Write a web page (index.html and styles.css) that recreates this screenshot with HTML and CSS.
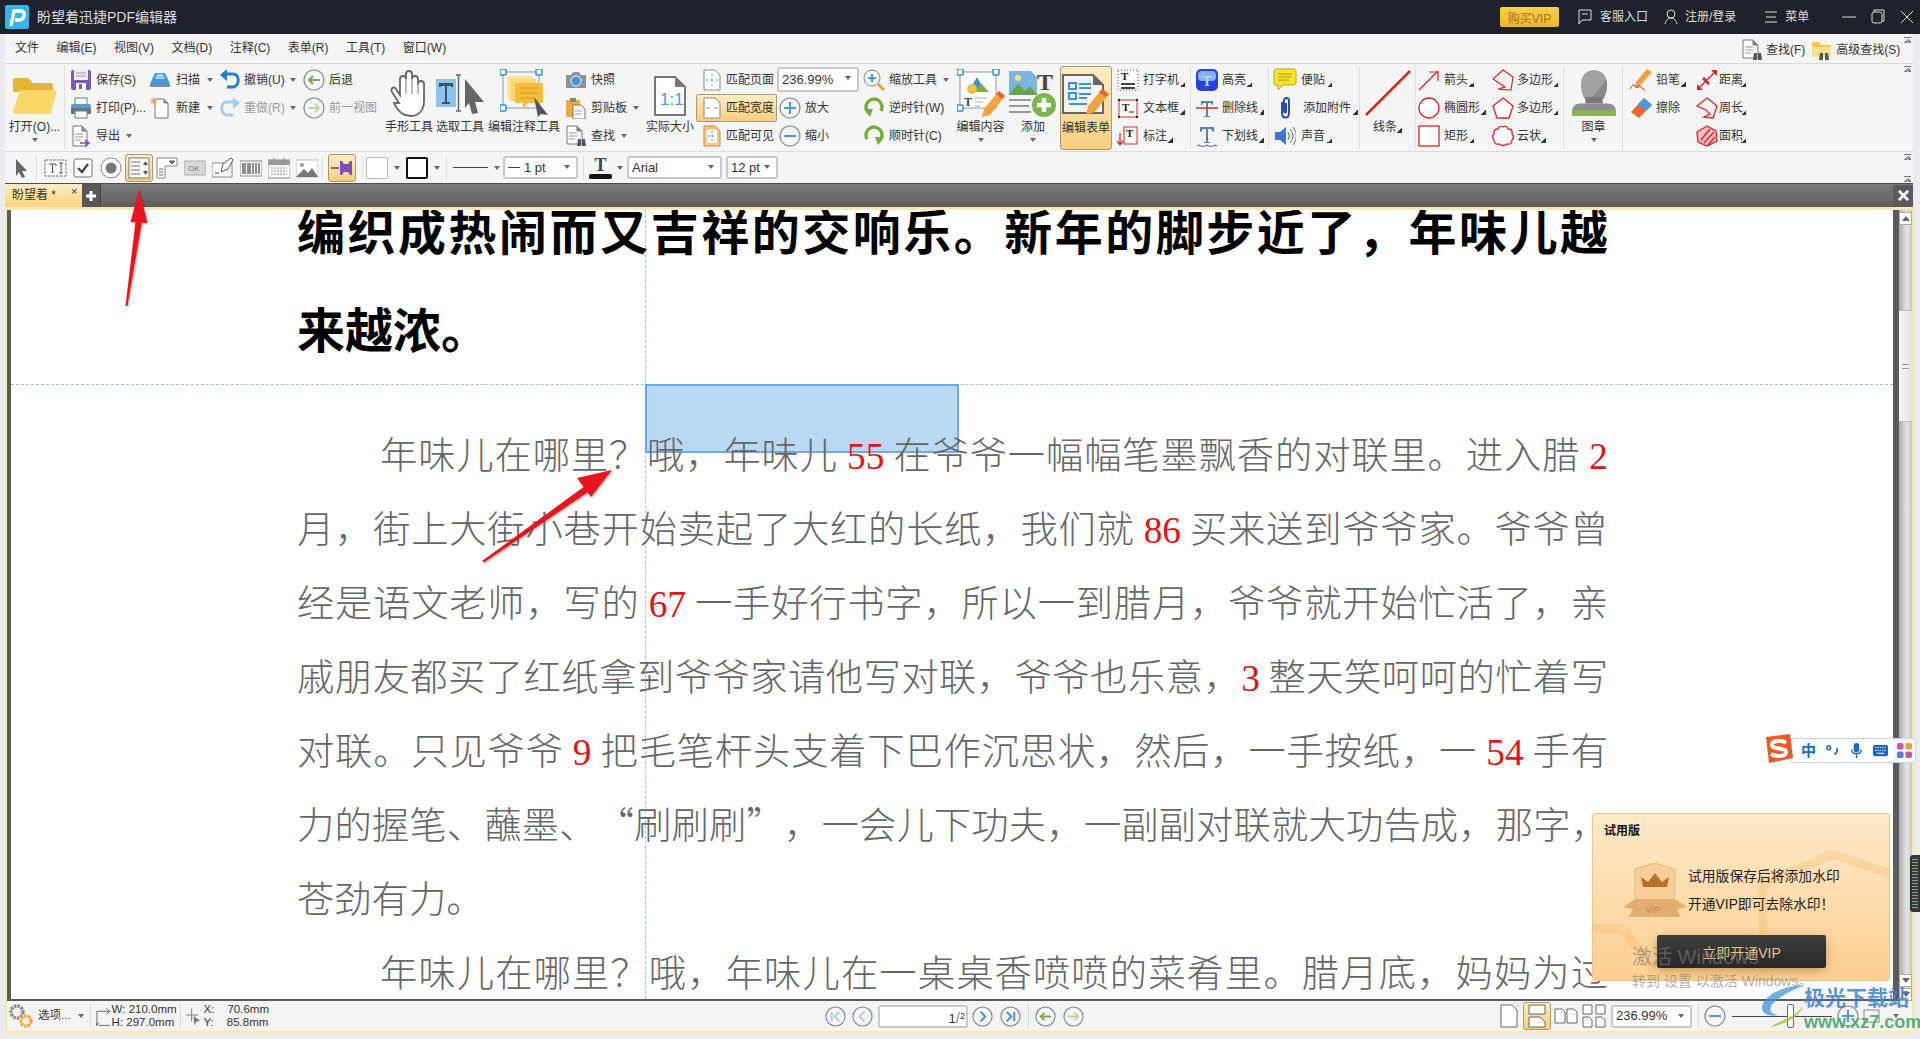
FILE: index.html
```html
<!DOCTYPE html>
<html lang="zh">
<head>
<meta charset="utf-8">
<title>盼望着迅捷PDF编辑器</title>
<link rel="stylesheet" href="styles.css">
</head>
<body>
<svg class="defs" aria-hidden="true">
  <symbol id="docbin" viewBox="0 0 22 22"><path d="M2 1h10l5 5v13H2z" fill="#fff" stroke="#777"/><path d="M12 1v5h5" fill="#888" stroke="#777"/><path d="M4 8h8M4 11h8M4 14h6" stroke="#999"/><path d="M13 14h3v7h-4zM17 14h3l1 7h-4z" fill="#4c5a66"/></symbol>
  <symbol id="circ" viewBox="0 0 22 22"><circle cx="11" cy="11" r="10" fill="#f6f6f6" stroke="#7f8a90" stroke-width="1.2"/></symbol>
</svg>
<div class="app">
  <header class="titlebar">
    <svg class="logo" viewBox="0 0 24 24"><rect width="24" height="24" rx="2" fill="#38b1ee"/><path d="M6 21L9 6h7c5 0 4 8-1 9h-5" fill="none" stroke="#fff" stroke-width="3.400"/></svg>
    <span class="apptitle">盼望着迅捷PDF编辑器</span>
    <button class="vip">购买VIP</button>
    <svg class="tico ms19" viewBox="0 0 14 16"><path d="M1 1h12v10H4l-3 4z" fill="none" stroke="#ddd"/><path d="M4 5h6" stroke="#ddd"/></svg>
    <span class="tlink ms8">客服入口</span>
    <svg class="tico ms16" viewBox="0 0 14 16"><circle cx="7" cy="5" r="4" fill="none" stroke="#ddd"/><path d="M1 15c1-4 3-6 6-6s5 2 6 6" fill="none" stroke="#ddd"/></svg>
    <span class="tlink ms7">注册/登录</span>
    <svg class="tico ms28" viewBox="0 0 14 16"><path d="M1 3h12M2 8h10M1 13h12" stroke="#ddd"/></svg>
    <span class="tlink ms7">菜单</span>
    <svg class="tico ms33" viewBox="0 0 14 16"><path d="M0 8h14" stroke="#ddd"/></svg>
    <svg class="tico ms15" viewBox="0 0 14 16"><path d="M3 3V1h10v11h-2" fill="none" stroke="#ddd"/><rect x="1" y="3" width="10" height="11" rx="2" fill="none" stroke="#ddd"/></svg>
    <svg class="tico ms15" viewBox="0 0 14 16"><path d="M1 2l12 12M13 2L1 14" stroke="#ddd"/></svg>
  </header>

  <div class="shell">
    <nav class="menubar">
      <span>文件</span><span>编辑(E)</span><span>视图(V)</span><span>文档(D)</span><span>注释(C)</span><span>表单(R)</span><span>工具(T)</span><span>窗口(W)</span>
      <div class="search">
        <svg class="ic" viewBox="0 0 22 22"><use href="#docbin"/></svg><span class="s1">查找(F)</span>
        <svg class="ic s2i" viewBox="0 0 22 22"><path d="M1 3h7l2 3h10v12H1z" fill="#f5c84a"/><path d="M1 8h19v10H1z" fill="#fbe08a"/><path d="M9 14h3v7H8zM14 14h3l1 7h-4z" fill="#4c5a66"/></svg><span class="s3">高级查找(S)</span>
      </div>
      <i class="grip"></i>
    </nav>

    <section class="ribbon">
      <div class="big w60 sep">
        <div class="bigic"><svg class="folder" viewBox="0 0 46 38"><path d="M3 1h13l5 5h17c2 0 3 1 3 3v6H1V3c0-1 1-2 2-2z" fill="#e7b434"/><path d="M8 13h37l-6 22c-.5 2-1 2-3 2H4c-2 0-3-1-3-3z" fill="#fbd868"/></svg></div>
        <span>打开(O)...</span><i class="caret"></i>
      </div>

      <div class="col w81 pl5 g4">
        <div class="row"><svg class="ic" viewBox="0 0 22 22"><rect x="1" y="1" width="20" height="20" rx="2" fill="#7c5cb2"/><rect x="4" y="1" width="14" height="10" fill="#eee"/><path d="M6 4h10M6 7h10" stroke="#999"/><rect x="6" y="14" width="10" height="7" fill="#fff"/><rect x="9" y="15" width="3" height="5" fill="#7c5cb2"/></svg>保存(S)</div>
        <div class="row"><svg class="ic" viewBox="0 0 22 22"><rect x="5" y="1" width="12" height="7" fill="#fff" stroke="#6a7c8c"/><rect x="1" y="7" width="20" height="10" rx="2" fill="#5a9bd0"/><rect x="1" y="11" width="20" height="6" rx="1" fill="#66747f"/><rect x="5" y="14" width="12" height="7" fill="#fff" stroke="#6a7c8c"/></svg>打印(P)...</div>
        <div class="row"><svg class="ic" viewBox="0 0 22 22"><path d="M3 1h9l5 5v15H3z" fill="#fff" stroke="#777"/><path d="M12 1v5h5" fill="#999" stroke="#777"/><path d="M5 9h8M5 12h8M5 15h6" stroke="#999"/><path d="M10 18h8M15 15l4 3-4 3" fill="none" stroke="#7a4fb8" stroke-width="1.6"/></svg>导出<i class="caret m8"></i></div>
      </div>
      <div class="col w70 pl3 g5">
        <div class="row"><svg class="ic" viewBox="0 0 22 22"><path d="M6 4h10l5 11H1z" fill="#3c98e0"/><path d="M8 5h6l2 5H6z" fill="#9fd3f6"/><rect x="1" y="15" width="20" height="3" rx="1" fill="#7c8c98"/></svg>扫描<i class="caret m7"></i></div>
        <div class="row"><svg class="ic" viewBox="0 0 22 22"><path d="M6 2h9l4 4v15H6z" fill="#fff" stroke="#777"/><path d="M15 2v4h4" fill="#999" stroke="#777"/><path d="M1 4h7M4.500 .5v7M2 1.500l5 5M7 1.500l-5 5" stroke="#f0a32c"/></svg>新建<i class="caret m7"></i></div>
      </div>
      <div class="col w84 pl3 g3">
        <div class="row"><svg class="ic" viewBox="0 0 22 22"><path d="M6 5h8c7 0 7 12 0 13H8" fill="none" stroke="#1f7fd0" stroke-width="3"/><path d="M8 0L1 6l7 6z" fill="#1f7fd0"/></svg>撤销(U)<i class="caret m6"></i></div>
        <div class="row off"><svg class="ic" viewBox="0 0 22 22"><path d="M16 5H8C1 5 1 17 8 18h6" fill="none" stroke="#a5cdea" stroke-width="3"/><path d="M14 0l7 6-7 6z" fill="#a5cdea"/></svg>重做(R)<i class="caret m6"></i></div>
      </div>
      <div class="col w84 pl3 g4">
        <div class="row"><svg class="ic" viewBox="0 0 22 22"><use href="#circ"/><path d="M17 11H6M10 7l-4 4 4 4" fill="none" stroke="#79ab4c" stroke-width="2"/></svg>后退</div>
        <div class="row off"><svg class="ic" viewBox="0 0 22 22"><use href="#circ"/><path d="M5 11h11M12 7l4 4-4 4" fill="none" stroke="#bcd6a6" stroke-width="2"/></svg>前一视图</div>
      </div>

      <div class="big w50">
        <div class="bigic"><svg class="bi38" viewBox="0 0 38 50"><path d="M9 35L2 24c-2-4 2-6 4-3l4 6V11c0-4 6-4 6 0V6c0-4 6-4 6 0v5c0-4 6-4 6 0v5c0-4 6-4 6 0v17c0 10-6 15-13 15-8 0-13-4-17-13z" fill="#fff" stroke="#666" stroke-width="1.800"/><path d="M16 10v16M22 10v16M28 15v11" stroke="#777"/></svg></div>
        <span>手形工具</span>
      </div>
      <div class="big w52">
        <div class="bigic"><svg class="bi48" viewBox="0 0 48 48"><rect x="0" y="10" width="20" height="28" fill="#8cc4ef"/><path d="M3 14h14v4h-2v-1h-4v16h3v2H6v-2h3V17H5v1H3z" fill="#3d5260"/><path d="M20 6h5M20 42h5M22.500 6v36" stroke="#666" stroke-width="1.500"/><path d="M29 10l19 23-9 0 3 11-6 1-3-11-4 5z" fill="#666"/></svg></div>
        <span>选取工具</span>
      </div>
      <div class="big w76">
        <div class="bigic"><svg class="bi48" viewBox="0 0 48 48"><rect x="3" y="3" width="36" height="36" fill="none" stroke="#8a9aa8"/><rect x="0" y="0" width="6" height="6" rx="1" fill="#fff" stroke="#2d8fe0" stroke-width="1.500"/><rect x="36" y="0" width="6" height="6" rx="1" fill="#fff" stroke="#2d8fe0" stroke-width="1.500"/><rect x="0" y="36" width="6" height="6" rx="1" fill="#fff" stroke="#2d8fe0" stroke-width="1.500"/><rect x="7" y="7" width="26" height="22" fill="#fbe79a"/><rect x="10" y="10" width="26" height="22" fill="#fad777"/><path d="M15 14h28v20H28l-5 6v-6h-8z" fill="#f6bd3b"/><path d="M20 19h18M20 24h18M20 29h14" stroke="#d49a20"/><path d="M34 28l14 18-7-1-3 3z" fill="#555"/></svg></div>
        <span>编辑注释工具</span>
      </div>

      <div class="col w82 pl3 g4">
        <div class="row"><svg class="ic" viewBox="0 0 22 22"><path d="M1 6h5l2-3h6l2 3h5v13H1z" fill="#8d9499"/><circle cx="11" cy="12" r="5" fill="#3f94da" stroke="#fff"/></svg>快照</div>
        <div class="row"><svg class="ic" viewBox="0 0 22 22"><rect x="1" y="3" width="14" height="17" rx="1" fill="#f4a636"/><rect x="5" y="1" width="6" height="4" fill="#887"/><path d="M8 8h8l4 4v10H8z" fill="#fff" stroke="#777"/><path d="M10 14h7M10 17h7" stroke="#999"/></svg>剪贴板<i class="caret m8"></i></div>
        <div class="row"><svg class="ic" viewBox="0 0 22 22"><use href="#docbin"/></svg>查找<i class="caret m8"></i></div>
      </div>
      <div class="big w52">
        <div class="bigic"><svg class="bi3442" viewBox="0 0 34 42"><path d="M2 2h20l10 10v28H2z" fill="#fff" stroke="#777" stroke-width="2"/><path d="M22 2l10 10H22z" fill="#777"/><text x="7" y="30" class="svt">1:1</text></svg></div>
        <span>实际大小</span>
      </div>
      <div class="col w81 fit">
        <div class="row"><svg class="ic" viewBox="0 0 22 22"><path d="M3 1h11l5 5v15H3z" fill="#fff" stroke="#888"/><path d="M11 5v12M5 11h12" stroke="#4a9ad8" stroke-dasharray="2 3"/></svg>匹配页面</div>
        <div class="row on"><svg class="ic" viewBox="0 0 22 22"><path d="M3 1h11l5 5v15H3z" fill="#fff" stroke="#888"/><path d="M5 11h4M13 11h4" stroke="#4a9ad8"/></svg>匹配宽度</div>
        <div class="row"><svg class="ic" viewBox="0 0 22 22"><path d="M3 1h11l5 5v15H3z" fill="#f7c98b" stroke="#c98a3a"/><rect x="6" y="5" width="10" height="13" fill="#fff"/><path d="M11 6v11M7 11h8" stroke="#4a9ad8" stroke-dasharray="2 2"/></svg>匹配可见</div>
      </div>
      <div class="col w84 pl2 g4 zm">
        <div class="combo z">236.99%<i class="caret"></i></div>
        <div class="row"><svg class="ic" viewBox="0 0 22 22"><use href="#circ"/><path d="M11 5v12M5 11h12" stroke="#4a9ad8" stroke-width="2"/></svg>放大</div>
        <div class="row"><svg class="ic" viewBox="0 0 22 22"><use href="#circ"/><path d="M5 11h12" stroke="#4a9ad8" stroke-width="2"/></svg>缩小</div>
      </div>
      <div class="col w93 pl2 g4">
        <div class="row"><svg class="ic" viewBox="0 0 22 22"><circle cx="9" cy="9" r="8" fill="#f6f6f6" stroke="#7f8a90"/><path d="M9 5v8M5 9h8" stroke="#4a9ad8" stroke-width="2"/><path d="M15 15l6 6" stroke="#e8a02c" stroke-width="3"/></svg>缩放工具<i class="caret m6"></i></div>
        <div class="row"><svg class="ic" viewBox="0 0 22 22"><path d="M7 17a8 8 0 1 1 11-3" fill="none" stroke="#79ab3c" stroke-width="3.400"/><path d="M1 12l9 0-3 8z" fill="#79ab3c"/></svg>逆时针(W)</div>
        <div class="row"><svg class="ic" viewBox="0 0 22 22"><path d="M15 17a8 8 0 1 0-11-3" fill="none" stroke="#79ab3c" stroke-width="3.400"/><path d="M21 12l-9 0 3 8z" fill="#79ab3c"/></svg>顺时针(C)</div>
      </div>
      <div class="big w53">
        <div class="bigic"><svg class="bi48" viewBox="0 0 48 48"><rect x="3" y="3" width="36" height="36" fill="#fff" stroke="#8a9aa8"/><rect x="0" y="0" width="6" height="6" rx="1" fill="#fff" stroke="#2d8fe0" stroke-width="1.500"/><rect x="36" y="0" width="6" height="6" rx="1" fill="#fff" stroke="#2d8fe0" stroke-width="1.500"/><rect x="0" y="36" width="6" height="6" rx="1" fill="#fff" stroke="#2d8fe0" stroke-width="1.500"/><path d="M20 8l8 14H12z" fill="#3d93c9"/><path d="M24 14l8 9H18z" fill="#7fae4a"/><circle cx="15" cy="20" r="5" fill="#f0c040"/><text x="7" y="37" class="svb">T</text><path d="M18 29h12M18 33h8M18 37h5" stroke="#aaa"/><path d="M42 22l6 5-15 19-8 2 2-8z" fill="#f2a23a"/><path d="M42 22l6 5-3 3-6-5z" fill="#e8622a"/></svg></div>
        <span>编辑内容</span><i class="caret"></i>
      </div>
      <div class="big w52">
        <div class="bigic"><svg class="bi48" viewBox="0 0 48 48"><path d="M0 2h22l6 6v18H0z" fill="#7cb6e0"/><path d="M0 26l9-11 7 7 5-5 7 9z" fill="#6aa24a"/><circle cx="9" cy="9" r="3" fill="#f6e37c"/><text x="28" y="21" class="svbig">T</text><path d="M0 31h22M0 37h20M0 43h22" stroke="#999" stroke-width="2"/><circle cx="35" cy="36" r="12" fill="#7ab648"/><path d="M35 29v14M28 36h14" stroke="#fff" stroke-width="4.500"/></svg></div>
        <span>添加</span><i class="caret"></i>
      </div>
      <div class="big w52 on ml1">
        <div class="bigic"><svg class="bi48" viewBox="0 0 48 44"><path d="M1 3h30l10 10v28H1z" fill="#f5f5f5" stroke="#666" stroke-width="2"/><path d="M31 3l10 10H31z" fill="#666"/><path d="M7 11h7v6H7zM7 21h7v6H7z" fill="none" stroke="#3a94dc" stroke-width="2"/><path d="M17 12h12M17 16h12M17 22h12M17 26h8M7 32h18" stroke="#3a94dc" stroke-width="2"/><path d="M40 17l7 5-14 18-9 3 2-9z" fill="#f2a23a"/><path d="M40 17l7 5-3 3-7-5z" fill="#e8622a"/></svg></div>
        <span>编辑表单</span>
      </div>
      <div class="col w78 pl4 g4 ml1 sep">
        <div class="row"><svg class="ic" viewBox="0 0 22 22"><rect x="1" y="1" width="20" height="20" fill="#fff" stroke="#444" stroke-dasharray="1 2"/><text x="4" y="11" class="svs">T</text><path d="M4 14h14v2H4zM4 18h14v2H4z" fill="#444"/></svg>打字机<i class="tick"></i></div>
        <div class="row"><svg class="ic" viewBox="0 0 22 22"><rect x="2" y="3" width="18" height="17" fill="#fff" stroke="#d42a2a"/><text x="5" y="14" class="svs">T</text><path d="M12 15h5" stroke="#222"/><path d="M1 2h2v2H1zM19 2h2v2h-2zM1 19h2v2H1zM19 19h2v2h-2z" fill="#222"/></svg>文本框<i class="tick"></i></div>
        <div class="row"><svg class="ic" viewBox="0 0 22 22"><rect x="7" y="2" width="13" height="17" fill="#fff" stroke="#d42a2a"/><text x="9" y="12" class="svs">T</text><path d="M3 8v11M0 16l3 4 3-4" fill="none" stroke="#d42a2a" stroke-width="1.300"/></svg>标注<i class="tick"></i></div>
      </div>
      <div class="col w78 pl5 g4 sep">
        <div class="row"><svg class="ic" viewBox="0 0 22 22"><rect width="22" height="22" rx="5" fill="#2c3fe0"/><rect x="2" y="2" width="18" height="10" rx="4" fill="#7fb4ef"/><text x="6" y="17" class="svw">T</text></svg>高亮<i class="tick"></i></div>
        <div class="row"><svg class="ic" viewBox="0 0 22 22"><path d="M5 4h12v4h-1l-1-2h-3v13h2v1H8v-1h2V6H7L6 8H5z" fill="#5584b8"/><path d="M0 11h22" stroke="#d42a2a" stroke-width="1.500"/></svg>删除线<i class="tick"></i></div>
        <div class="row"><svg class="ic" viewBox="0 0 22 22"><path d="M4 2h14v5h-1l-2-3h-3v13h2v1H8v-1h2V4H7L5 7H4z" fill="#5584b8"/><path d="M1 21q2-2 4 0t4 0 4 0 4 0 4 0" fill="none" stroke="#4b4bcf"/></svg>下划线<i class="tick"></i></div>
      </div>
      <div class="col w91 pl5 g5 sep">
        <div class="row"><svg class="ic i24" viewBox="0 0 24 24"><path d="M3 1h18c1 0 2 1 2 2v12c0 1-1 2-2 2H10l-5 5v-5H3c-1 0-2-1-2-2V3c0-1 1-2 2-2z" fill="#f6e52c" stroke="#b8a820"/><path d="M5 6h14M5 9h14M5 12h11" stroke="#a89a1c"/></svg>便贴<i class="tick"></i></div>
        <div class="row"><svg class="ic" viewBox="0 0 22 22"><path d="M8 5v11c0 6 7 6 7 0V4c0-4-5-4-5 0v10c0 2 2 2 2 0V6" fill="none" stroke="#2c4fa8" stroke-width="2"/></svg><span class="ms2">添加附件</span><i class="tick"></i></div>
        <div class="row"><svg class="ic" viewBox="0 0 22 22"><path d="M1 7h5l6-5v18l-6-5H1z" fill="#4076d0"/><path d="M14 7q3 4 0 8M16 4q6 7 0 14M19 2q7 9 0 18" fill="none" stroke="#667"/></svg>声音<i class="tick"></i></div>
      </div>
      <div class="big w56 sepb">
        <div class="bigic"><svg class="bi46" viewBox="0 0 46 46"><path d="M1 45L45 1" stroke="#d92525" stroke-width="2.500"/></svg></div>
        <span class="lab">线条<i class="tick"></i></span>
      </div>
      <div class="col w73 pl2 g4">
        <div class="row"><svg class="ic" viewBox="0 0 22 22"><path d="M1 21L20 2M11 3h9v9" fill="none" stroke="#d92525" stroke-width="1.200"/></svg>箭头<i class="tick"></i></div>
        <div class="row"><svg class="ic" viewBox="0 0 22 22"><circle cx="11" cy="11" r="10" fill="#fff" stroke="#d92525" stroke-width="1.300"/></svg>椭圆形<i class="tick"></i></div>
        <div class="row"><svg class="ic" viewBox="0 0 22 22"><rect x="1" y="1" width="20" height="20" fill="#fff" stroke="#d92525" stroke-width="1.300"/></svg>矩形<i class="tick"></i></div>
      </div>
      <div class="col w75 pl3 g3 sep">
        <div class="row"><svg class="ic" viewBox="0 0 22 22"><path d="M11 1l10 7-2 13-13-1 7-2L1 10z" fill="none" stroke="#d92525" stroke-width="1.200"/></svg>多边形<i class="tick"></i></div>
        <div class="row"><svg class="ic" viewBox="0 0 22 22"><path d="M11 1l10 8-4 12H5L1 9z" fill="#fff" stroke="#d92525" stroke-width="1.300"/></svg>多边形<i class="tick"></i></div>
        <div class="row"><svg class="ic" viewBox="0 0 22 22"><path d="M11 2q4-2 5 2 5 0 4 5 3 3 0 6 0 5-5 4-4 3-8 0-5 1-5-4-3-3 0-6-1-5 4-5 1-4 5-2z" fill="#fff" stroke="#d92525" stroke-width="1.300"/></svg>云状<i class="tick"></i></div>
      </div>
      <div class="big w58 sepb ml1">
        <div class="bigic"><svg class="bi46" viewBox="0 0 46 48"><path d="M13 30C9 22 9 16 10 10 12 3 18 0 23 0s11 3 13 10c1 6 1 12-3 20z" fill="#a2a2a2"/><path d="M36 10c1 6 1 12-3 20H20z" fill="#8a8a8a"/><path d="M14 28h18v7H14z" fill="#777"/><path d="M0 45c0-7 3-10 9-10h28c6 0 9 3 9 10z" fill="#8f8f8f"/><rect y="42" width="46" height="6" fill="#8cb44e"/></svg></div>
        <span>图章</span><i class="caret"></i>
      </div>
      <div class="col w67 pl6 g4 ml1">
        <div class="row"><svg class="ic" viewBox="0 0 22 22"><path d="M17 0l5 3-12 14-5 2 1-6z" fill="#f2a23a"/><path d="M0 20q3-6 5-3t3 1 3 0 4 3" fill="none" stroke="#d92525"/></svg>铅笔<i class="tick"></i></div>
        <div class="row"><svg class="ic" viewBox="0 0 22 22"><path d="M14 1l8 7-13 13-8-6z" fill="#ee6a2c"/><path d="M14 1l8 7-6 6-8-7z" fill="#4a9ae4"/></svg>擦除</div>
      </div>
      <div class="col pl5 g1">
        <div class="row"><svg class="ic" viewBox="0 0 22 22"><path d="M3 19L19 3" stroke="#d92525" stroke-width="1.500"/><path d="M15 1l6 0 0 6zM1 15l6 6-6 0zM8 8l6 6-2 2-6-6z" fill="#d92525"/></svg>距离<i class="tick"></i></div>
        <div class="row"><svg class="ic" viewBox="0 0 22 22"><path d="M11 1l10 8-4 12-9-1 6-3-4-4-9-4z" fill="none" stroke="#d92525" stroke-width="1.300"/></svg>周长<i class="tick"></i></div>
        <div class="row"><svg class="ic" viewBox="0 0 22 22"><path d="M11 1l9 5 1 10-10 5-9-4-1-10z" fill="#f7c0c0" stroke="#d92525" stroke-width="1.300"/><path d="M5 15L14 4M8 18L18 7M12 20l7-8" stroke="#d92525" stroke-width="1.500"/></svg>面积<i class="tick"></i></div>
      </div>
      <i class="grip gr2"></i>
    </section>

    <section class="toolbar">
      <svg class="t12" viewBox="0 0 12 20"><path d="M1 1l11 12-5 0 3 6-3 1-3-6-3 4z" fill="#666"/></svg>
      <i class="vs ml9"></i>
      <svg class="t23 ml7" viewBox="0 0 23 22"><rect x="1" y="3" width="21" height="16" fill="#fff" stroke="#777" stroke-dasharray="3 1"/><path d="M5 7h7v2M8.500 7v8M7 15h3M15 6h4M15 16h4M17 6v10" fill="none" stroke="#555"/></svg>
      <svg class="t20 ml6" viewBox="0 0 20 22"><rect x="1" y="2" width="18" height="18" rx="2" fill="#fff" stroke="#777"/><path d="M5 11l4 4 6-8" fill="none" stroke="#444" stroke-width="2.200"/></svg>
      <svg class="t22 ml7" viewBox="0 0 22 22"><circle cx="11" cy="11" r="10" fill="#fff" stroke="#888"/><circle cx="11" cy="11" r="5.500" fill="#777"/></svg>
      <div class="tact ml3"><svg class="t22" viewBox="0 0 22 22"><rect x="1" y="1" width="20" height="20" fill="#fff" stroke="#777"/><path d="M3 5h9M3 9h9M3 13h9M3 17h9" stroke="#666"/><path d="M15 8l2.500-4 2.500 4zM15 14l2.500 4 2.500-4z" fill="#555"/></svg></div>
      <svg class="t22 ml3" viewBox="0 0 22 22"><path d="M1 1h20v8H9v12H1z" fill="#fff" stroke="#888"/><path d="M13 4h6l-3 3zM3 12h4M3 15h4M3 18h4" fill="#666" stroke="#666"/></svg>
      <svg class="t22 ml6" viewBox="0 0 22 22"><rect y="4" width="22" height="14" rx="1" fill="#d8d8d8" stroke="#aaa"/><text x="4" y="14" class="svok">OK</text></svg>
      <svg class="t22 ml6" viewBox="0 0 22 22"><rect y="6" width="20" height="14" fill="#fff" stroke="#888"/><path d="M3 16h4" stroke="#444"/><path d="M9 15l2-8 8-6 2 2-5 9z" fill="#fff" stroke="#555"/></svg>
      <svg class="t22 ml6" viewBox="0 0 22 22"><rect y="4" width="22" height="15" fill="#fff" stroke="#888"/><path d="M3 6v11M5 6v11M8 6v11M10 6v11M13 6v11M16 6v11M19 6v11" stroke="#555" stroke-width="1.300"/></svg>
      <svg class="t22 ml6" viewBox="0 0 22 22"><rect y="3" width="22" height="18" fill="#fff" stroke="#888"/><rect y="3" width="22" height="5" fill="#999"/><path d="M6 1v4M16 1v4M3 11h16M3 14h16M3 17h16" stroke="#888" stroke-dasharray="2 1"/></svg>
      <svg class="t22 ml6" viewBox="0 0 22 22"><rect y="3" width="22" height="17" fill="#fff" stroke="#bbb"/><path d="M0 20l8-8 4 4 4-5 6 9z" fill="#777"/><circle cx="6" cy="8" r="2" fill="#999"/></svg>
      <i class="vs ml4"></i>
      <div class="tact ml5"><svg class="t22" viewBox="0 0 22 22"><path d="M0 11h8" stroke="#4b4b4b" stroke-width="1.500"/><path d="M9 4h2l2 3h4l2-3h2v14h-2l-2-3h-4l-2 3H9z" fill="#7a4fb8"/></svg></div>
      <i class="vs ml6"></i>
      <div class="swatch ml3"></div><i class="caret ml6"></i>
      <div class="swatch dark ml6"></div><i class="caret ml6"></i>
      <i class="vs ml6"></i>
      <div class="lineprev ml6"></div><i class="caret ml6"></i>
      <div class="combo w75 ml3"><span class="dash"></span>1 pt<i class="caret"></i></div>
      <i class="vs ml5"></i>
      <div class="tcolor ml5"><span>T</span><b></b></div><i class="caret ml5"></i>
      <div class="combo w95 ml4">Arial<i class="caret"></i></div>
      <div class="combo w52 ml4">12 pt<i class="caret"></i></div>
      <i class="grip gr3"></i><i class="grip gr4"></i>
    </section>

    <div class="tabbar">
      <div class="tab">盼望着 *<small>×</small></div>
      <div class="plus"><svg viewBox="0 0 10 10"><path d="M5 0v10M0 5h10" stroke="#fff" stroke-width="3"/></svg></div>
      <div class="tabclose"><svg viewBox="0 0 12 12"><path d="M1 1l10 10M11 1L1 11" stroke="#fff" stroke-width="3"/></svg></div>
    </div>
  </div>

  <div class="frame">
    <div class="work">
      <main class="doc">
        <i class="guide-v"></i><i class="guide-h"></i>
        <div class="selbox"></div>
        <div class="page">
          <h1>编织成热闹而又吉祥的交响乐。新年的脚步近了，年味儿越</h1>
          <h1 class="last">来越浓。</h1>
          <p class="ind">年味儿在哪里？哦，年味儿 <b>55</b> 在爷爷一幅幅笔墨飘香的对联里。进入腊 <b>2</b></p>
          <p>月，街上大街小巷开始卖起了大红的长纸，我们就 <b>86</b> 买来送到爷爷家。爷爷曾</p>
          <p>经是语文老师，写的 <b>67</b> 一手好行书字，所以一到腊月，爷爷就开始忙活了，亲</p>
          <p>戚朋友都买了红纸拿到爷爷家请他写对联，爷爷也乐意，<b>3</b> 整天笑呵呵的忙着写</p>
          <p>对联。只见爷爷 <b>9</b> 把毛笔杆头支着下巴作沉思状，然后，一手按纸，一 <b>54</b> 手有</p>
          <p>力的握笔、蘸墨、“刷刷刷”，一会儿下功夫，一副副对联就大功告成，那字，</p>
          <p class="last">苍劲有力。</p>
          <p class="ind">年味儿在哪里？哦，年味儿在一桌桌香喷喷的菜肴里。腊月底，妈妈为过</p>
        </div>
      </main>
      <aside class="vscroll">
        <div class="sbtn up"></div>
        <div class="thumb"><i></i></div>
        <div class="sbtn dn dn1"></div>
        <div class="sbtn dn"></div>
      </aside>
    </div>
    <footer class="status">
      <svg class="st24" viewBox="0 0 24 24"><circle cx="8" cy="8" r="6" fill="none" stroke="#8a8a8a" stroke-width="3.500" stroke-dasharray="2.500 1"/><circle cx="17" cy="17" r="5" fill="none" stroke="#f2a53a" stroke-width="3.500" stroke-dasharray="2.500 1"/></svg>
      <span class="ml5">选项...</span><i class="caret ml7"></i>
      <i class="vs ml6"></i>
      <svg class="st16 ml5" viewBox="0 0 16 24"><path d="M1 22V7h13M11 4l4 3-4 3M1 22l-1-3M1 22l2-3M3 22h12" fill="none" stroke="#666"/></svg>
      <div class="coords"><span>W: 210.0mm</span><span>H: 297.0mm</span></div>
      <i class="vs ml3"></i>
      <svg class="st16 ml5" viewBox="0 0 16 24"><path d="M6 4v14M0 11h13" stroke="#777"/><path d="M8 12l7 5-4 1-2 4z" fill="#777"/></svg>
      <div class="coords xy"><span>X:<em>70.6mm</em></span><span>Y:<em>85.8mm</em></span></div>

      <div class="nav">
        <svg class="rb" viewBox="0 0 22 22"><use href="#circ"/><path d="M7 6v10M15 6l-5 5 5 5" fill="none" stroke="#a9cfee" stroke-width="2"/></svg>
        <svg class="rb ml6" viewBox="0 0 22 22"><use href="#circ"/><path d="M13 6l-5 5 5 5" fill="none" stroke="#a9cfee" stroke-width="2"/></svg>
        <div class="pageno ml5">1<span>/</span><small>2</small></div>
        <svg class="rb ml4" viewBox="0 0 22 22"><use href="#circ"/><path d="M9 6l5 5-5 5" fill="none" stroke="#3f94da" stroke-width="2"/></svg>
        <svg class="rb ml7" viewBox="0 0 22 22"><use href="#circ"/><path d="M15 6v10M7 6l5 5-5 5" fill="none" stroke="#3f94da" stroke-width="2"/></svg>
        <i class="vs ml7"></i>
        <svg class="rb ml6" viewBox="0 0 22 22"><use href="#circ"/><path d="M17 11H6M10 7l-4 4 4 4" fill="none" stroke="#79ab4c" stroke-width="2"/></svg>
        <svg class="rb ml7" viewBox="0 0 22 22"><use href="#circ"/><path d="M5 11h11M12 7l4 4-4 4" fill="none" stroke="#bcd6a6" stroke-width="2"/></svg>
      </div>

      <div class="views">
        <svg class="v18" viewBox="0 0 18 24"><path d="M1 1h11l5 5v17H1z" fill="#fff" stroke="#666"/></svg>
        <div class="vact ml5"><svg class="v18" viewBox="0 0 18 24"><path d="M1 1h16v9H1zM1 13h11l5 5v5H1z" fill="#fff" stroke="#666"/></svg></div>
        <svg class="v24 ml3" viewBox="0 0 24 24"><path d="M1 5h7l3 3v11H1zM13 5h7l3 3v11H13z" fill="#fff" stroke="#666"/></svg>
        <svg class="v24 ml4" viewBox="0 0 24 24"><path d="M1 1h9v9H1zM14 1h9v9h-9zM1 13h6l3 3v7H1zM14 13h6l3 3v7h-9z" fill="#fff" stroke="#666"/></svg>
        <div class="combo w81 ml5">236.99%<i class="caret"></i></div>
        <i class="vs ml6"></i>
        <svg class="zb ml5" viewBox="0 0 22 22"><use href="#circ"/><path d="M5 11h12" stroke="#4a9ad8" stroke-width="2"/></svg>
        <div class="slider ml6"><i></i></div>
        <svg class="zb ml5" viewBox="0 0 22 22"><use href="#circ"/><path d="M11 5v12M5 11h12" stroke="#4a9ad8" stroke-width="2"/></svg>
        <svg class="v18 ml4" viewBox="0 0 18 24"><rect x="1" y="6" width="15" height="12" fill="none" stroke="#888"/></svg>
        <i class="caret ml12"></i>
      </div>
    </footer>
  </div>

  <svg class="redarrows" viewBox="0 0 700 600">
    <defs><filter id="sh"><feDropShadow dx="1" dy="1" stdDeviation="1" flood-opacity=".3"/></filter></defs>
    <g filter="url(#sh)">
      <path d="M125.500 306L136 218 142.500 218.500 127.500 306z" fill="#e8141c"/>
      <path d="M139 190l-8.500 32 17 1z" fill="#e8141c"/>
      <path d="M482 561L585 486 589 491.500 484 562.500z" fill="#e8141c"/>
      <path d="M612 470l-35 8 14 19z" fill="#e8141c"/>
    </g>
  </svg>

  <div class="ime">
    <svg class="imes" viewBox="0 0 30 30"><path d="M3 3l24-3 3 24-24 5z" fill="#ee5a24"/><path d="M23 9c-3-3-14-3-14 2s14 2 14 7-10 5-15 2" fill="none" stroke="#fff" stroke-width="4"/></svg>
    <div class="imebar">
      <b>中</b>
      <svg class="imi" viewBox="0 0 16 16"><circle cx="4" cy="5" r="2" fill="none" stroke="#1669c8" stroke-width="1.500"/><path d="M12 6c2 0 1 5-2 6" fill="none" stroke="#1669c8" stroke-width="2"/></svg>
      <svg class="imi" viewBox="0 0 16 16"><rect x="5" width="6" height="10" rx="3" fill="#1669c8"/><path d="M3 7c0 6 10 6 10 0M8 12v4" fill="none" stroke="#1669c8" stroke-width="1.500"/></svg>
      <svg class="imi" viewBox="0 0 16 16"><rect y="2" width="16" height="12" rx="2" fill="#1669c8"/><path d="M2 5h12M2 8h12" stroke="#fff" stroke-dasharray="1.500 1"/><path d="M4 11h8" stroke="#fff"/></svg>
      <svg class="imi" viewBox="0 0 16 16"><rect width="7" height="7" rx="2" fill="#c45ab0"/><rect x="9" width="7" height="7" rx="2" fill="#e8a030"/><rect y="9" width="7" height="7" rx="2" fill="#5a7fd8"/><rect x="9" y="9" width="7" height="7" rx="2" fill="#c45ab0"/></svg>
    </div>
  </div>

  <aside class="promo">
    <svg class="promobg" viewBox="0 0 298 168"><path d="M170 168V70L240 40 298 60M0 115h30l30 40" fill="none" stroke="#f4bd73" stroke-opacity=".35" stroke-width="9"/></svg>
    <h2>试用版</h2>
    <div class="promomain">
      <svg class="badge" viewBox="0 0 64 58"><path d="M12 6L32 0 52 6v24c0 10-10 18-20 22C22 48 12 40 12 30z" fill="#f6cf98" stroke="#e9b878"/><path d="M20 24l-2-10 7 5 7-9 7 9 7-5-2 10z" fill="#b8702a"/><path d="M0 44l12-8h40l12 8-10 2 4 8H6l4-8z" fill="#e3ad6e"/><text x="23" y="50" class="svvip">VIP</text></svg>
      <div class="promotxt"><p>试用版保存后将添加水印</p><p>开通VIP即可去除水印！</p></div>
    </div>
    <button class="open">立即开通VIP</button>
  </aside>

  <div class="winact"><b>激活 Windows</b><span>转到 设置 以激活 Windows。</span></div>

  <div class="mark">
    <svg class="markic" viewBox="0 0 46 44"><path d="M44 1C22 2 2 12 2 24c0 6 8 9 16 7C8 30 8 22 18 15 26 9 36 5 44 1z" fill="#3f94da" fill-opacity=".75"/><path d="M10 43c14-2 30-10 34-22-6 10-22 15-34 22z" fill="#9ac640" fill-opacity=".8"/></svg>
    <div class="marktxt"><b>极光下载站</b><span>www.xz7.com</span></div>
  </div>
  <div class="gadget"></div>
</div>
</body>
</html>
```

FILE: styles.css
```css
* { box-sizing: border-box; }
html, body { margin: 0; height: 100%; }
body { background: #ececf0; font: 12px/1.2 "Liberation Sans", "Noto Sans CJK SC", sans-serif; color: #333; overflow: hidden; }
.defs { position: absolute; width: 0; height: 0; }
i, em { font-style: normal; }
.app { position: relative; width: 1920px; height: 1039px; display: flex; flex-direction: column; overflow: hidden; }

.titlebar { height: 34px; background: #1f222a; display: flex; align-items: center; padding-left: 5px; color: #ddd; flex: none; }
.logo { width: 24px; height: 24px; }
.apptitle { margin-left: 8px; font-size: 14px; width: 1463px; color: #dcdcdc; }
.vip { width: 59px; height: 20px; padding: 0; border: 0; border-radius: 2px; background: linear-gradient(#fbd14b, #efb52f); color: #a3761c; font: 12px "Liberation Sans", "Noto Sans CJK SC", sans-serif; }
.tico { width: 14px; height: 16px; flex: none; }
.tlink { color: #ddd; font-size: 12px; white-space: nowrap; }
.ms19 { margin-left: 19px; } .ms8 { margin-left: 8px; } .ms16 { margin-left: 16px; } .ms7 { margin-left: 7px; }
.ms28 { margin-left: 28px; } .ms33 { margin-left: 33px; } .ms15 { margin-left: 15px; } .ms2 { margin-left: 2px; }

.shell { margin: 0 7px 0 5px; background: #f5f5f5; flex: none; }
.menubar { height: 30px; display: flex; align-items: center; gap: 17.500px; padding-left: 10px; position: relative; border-bottom: 1px solid #d9d9d9; }
.search { position: absolute; left: 1736px; top: 4px; height: 24px; display: flex; align-items: center; }
.search .s1 { margin-left: 3px; }
.search .s2i { margin-left: 6px; }
.search .s3 { margin-left: 3px; }
.grip { position: absolute; right: 2px; width: 7px; height: 6px; border-top: 1px solid #777; background: linear-gradient(135deg, transparent 48%, #888 50%) left/50% 100% no-repeat, linear-gradient(225deg, transparent 48%, #888 50%) right/50% 100% no-repeat; }
.menubar .grip { top: 3px; }

.ribbon { height: 88px; display: flex; padding-top: 2px; border-bottom: 1px solid #dcdcdc; position: relative; }
.ribbon .grip { top: 2px; }
.col { display: flex; flex-direction: column; flex: none; }
.row { height: 28px; display: flex; align-items: center; white-space: nowrap; flex: none; }
.ic { width: 22px; height: 22px; flex: none; }
.i24 { width: 24px; height: 24px; margin-left: -1px; margin-right: -1px; }
.off { color: #9a9a9a; }
.sep { border-right: 1px solid #e2e2e2; height: 83px; }
.sepb { border-right: 1px solid #e2e2e2; height: 83px; }
.w60 { width: 60px; } .w50 { width: 50px; } .w52 { width: 52px; } .w53 { width: 53px; } .w56 { width: 56px; } .w58 { width: 58px; }
.w67 { width: 67px; } .w70 { width: 70px; } .w73 { width: 73px; } .w75 { width: 75px; } .w76 { width: 76px; } .w78 { width: 78px; }
.w81 { width: 81px; } .w82 { width: 82px; } .w84 { width: 84px; } .w91 { width: 91px; } .w93 { width: 93px; } .w95 { width: 95px; }
.pl2 { padding-left: 2px; } .pl3 { padding-left: 3px; } .pl4 { padding-left: 4px; } .pl5 { padding-left: 5px; } .pl6 { padding-left: 6px; }
.g1 .row { gap: 1px; } .g3 .row { gap: 3px; } .g4 .row { gap: 4px; } .g5 .row { gap: 5px; }
.fit .row { padding-left: 4px; gap: 3px; border: 1px solid transparent; border-radius: 2px; }
.on { background: linear-gradient(#fcecc4, #f7cf7e); border: 1px solid #a89a70 !important; border-radius: 3px; }
.caret { display: block; flex: none; width: 0; height: 0; border-top: 4px solid #666; border-left: 3px solid transparent; border-right: 3px solid transparent; }
.row .m6 { margin-left: 2px; } .row .m7 { margin-left: 2px; } .row .m8 { margin-left: 2px; }
.tick { display: block; flex: none; width: 5px; height: 5px; margin: 8px 0 0 -3px; background: linear-gradient(135deg, transparent 50%, #333 50%); }
.big { display: flex; flex-direction: column; align-items: center; flex: none; height: 84px; white-space: nowrap; }
.big > span { line-height: 15px; }
.big .caret { margin-top: 3px; }
.big.w60 { border-right: 1px solid #e2e2e2; height: 83px; }
.bigic { height: 54px; display: flex; align-items: center; justify-content: center; flex: none; width: 100%; }
.lab { display: flex; }
.lab .tick { margin-left: 0; }
.folder { width: 46px; height: 38px; margin-top: 6px; }
.bi38 { width: 38px; height: 50px; }
.bi48 { width: 48px; height: 48px; }
.bi46 { width: 46px; height: 46px; }
.bi3442 { width: 34px; height: 42px; margin-top: 6px; }
.ml1 { margin-left: 1px; } .ml3 { margin-left: 3px; } .ml4 { margin-left: 4px; } .ml5 { margin-left: 5px; } .ml6 { margin-left: 6px; }
.ml7 { margin-left: 7px; } .ml9 { margin-left: 9px; } .ml12 { margin-left: 12px; }
.combo { position: relative; display: flex; align-items: center; height: 23px; background: #fff; border: 2px solid #c9c9c9; border-radius: 3px; padding-left: 3px; font-size: 13px; flex: none; color: #333; }
.combo .caret { position: absolute; right: 6px; top: 7px; }
.z { width: 82px; height: 25px; margin: 1px 0 2px -2px; }
.svt { font: 17px "Liberation Sans", sans-serif; fill: #4a9ad8; }
.svb { font: bold 12px "Liberation Serif", serif; fill: #444; }
.svbig { font: bold 24px "Liberation Serif", serif; fill: #444; }
.svs { font: bold 11px "Liberation Serif", serif; fill: #222; }
.svw { font: bold 15px "Liberation Serif", serif; fill: #bcd4f6; }
.svok { font: 8px "Liberation Sans", sans-serif; fill: #777; }
.svvip { font: 9px "Liberation Sans", sans-serif; fill: #b88a55; }

.toolbar { height: 31px; display: flex; align-items: center; padding-left: 10px; position: relative; }
.gr3 { top: 2px; } .gr4 { top: 24px; }
.t12 { width: 12px; height: 20px; flex: none; }
.t20 { width: 20px; height: 22px; flex: none; }
.t22 { width: 22px; height: 22px; flex: none; }
.t23 { width: 23px; height: 22px; flex: none; }
.vs { display: block; width: 1px; height: 24px; background: #dedede; flex: none; }
.tact { width: 28px; height: 28px; display: flex; align-items: center; justify-content: center; flex: none; border: 1px solid #a89a70; border-radius: 3px; background: linear-gradient(#fcecc4, #f7cf7e); }
.swatch { width: 22px; height: 22px; background: #fff; border: 1px solid #bbb; border-radius: 2px; flex: none; }
.swatch.dark { border: 2px solid #111; }
.lineprev { width: 35px; height: 1px; background: #444; flex: none; }
.dash { width: 12px; height: 1px; background: #444; margin-right: 4px; }
.tcolor { width: 23px; display: flex; flex-direction: column; align-items: center; flex: none; }
.tcolor span { font: bold 18px/18px "Liberation Serif", serif; color: #444; }
.tcolor b { width: 23px; height: 5px; border-radius: 2px; background: #111; display: block; }
.combo.w52 { width: 52px; }

.tabbar { height: 24px; background: linear-gradient(#7b7b7b, #5e5e5e); border-top: 1px solid #4d4d4d; display: flex; position: relative; }
.tab { width: 77px; background: linear-gradient(#fbeec8, #fbd27f); padding: 4px 0 0 7px; font-size: 12px; position: relative; }
.tab small { position: absolute; left: 66px; top: 1px; font-size: 11px; }
.plus { width: 19px; display: flex; align-items: center; justify-content: center; border-right: 1px solid #444; background: #585858; }
.plus svg { width: 10px; height: 10px; }
.tabclose { position: absolute; right: 0; top: 1px; width: 20px; height: 21px; background: #5a5a5a; display: flex; align-items: center; justify-content: center; }
.tabclose svg { width: 11px; height: 11px; }

.frame { margin: 0 5px 5px; border: solid #f6e8b8; border-width: 3px 3px 3px 2px; flex: 1; min-height: 0; display: flex; flex-direction: column; background: #f5f5f5; }
.work { flex: 1; min-height: 0; display: flex; }
.doc { flex: 1; position: relative; overflow: hidden; background: #fff; border: solid #5c5c5c; border-width: 0 6px 2px 4px; }
.page { position: relative; width: 1311px; margin-left: 286px; margin-top: -30px; font-family: "Noto Sans CJK SC", "Noto Sans CJK TC", sans-serif; text-spacing-trim: space-all; }
.page h1 { margin: 0; font-size: 48px; line-height: 98px; height: 98px; font-weight: 700; color: #000; text-align: justify; text-align-last: justify; white-space: nowrap; }
.page h1.last { text-align-last: left; margin-bottom: 40px; }
.page p { margin: 0; font-size: 37.300px; line-height: 74px; height: 74px; font-weight: 300; color: #666; text-align: justify; text-align-last: justify; white-space: nowrap; }
.page p.last { text-align-last: left; }
.page p.ind { padding-left: 83px; }
.page p b { font-family: "Liberation Serif", serif; font-weight: 400; color: #e01414; }
.guide-v { position: absolute; left: 634px; top: 0; bottom: 0; border-left: 1px dashed #a9c0d2; }
.guide-h { position: absolute; left: 0; right: 0; top: 174px; border-top: 1px dashed #a9c0d2; }
.selbox { position: absolute; left: 634px; top: 174px; width: 314px; height: 69px; background: #bbd8f3; border: 2px solid #6ea9e2; }

.vscroll { width: 13px; flex: none; position: relative; background: linear-gradient(90deg, #a9a9a9, #e6e6e6 60%, #c6c6c6); }
.sbtn { position: absolute; left: 0; width: 13px; height: 13px; background: #fff; border: 1px solid #aaa; }
.sbtn.up { top: 2px; }
.sbtn.up::after, .sbtn.dn::after { content: ""; position: absolute; left: 2px; top: 3px; border-left: 4px solid transparent; border-right: 4px solid transparent; }
.sbtn.up::after { border-bottom: 5px solid #666; }
.sbtn.dn::after { border-top: 5px solid #666; }
.sbtn.dn { bottom: 0; }
.sbtn.dn1 { bottom: 14px; }
.thumb { position: absolute; left: 0; top: 100px; width: 13px; height: 112px; background: linear-gradient(90deg, #f6f6f6, #e4e4e4); border: 1px solid #bbb; border-width: 1px 0; display: flex; align-items: center; justify-content: center; }
.thumb i { width: 7px; height: 5px; border: solid #999; border-width: 1px 0; display: block; }

.status { height: 30px; flex: none; display: flex; align-items: center; padding-left: 2px; background: #f4f4f4; font-size: 11.500px; position: relative; }
.st24 { width: 24px; height: 24px; flex: none; }
.st16 { width: 15px; height: 24px; flex: none; }
.coords { display: flex; flex-direction: column; font: 11.500px/13px "Liberation Sans", sans-serif; margin-left: 1px; white-space: nowrap; }
.coords.xy { margin-left: 3px; }
.coords em { margin-left: 13px; }
.nav { position: absolute; left: 818px; top: 4px; display: flex; align-items: center; height: 22px; }
.rb { width: 21px; height: 21px; flex: none; }
.zb { width: 22px; height: 22px; flex: none; }
.pageno { width: 90px; height: 23px; background: #fff; border: 2px solid #c9c9c9; border-radius: 3px; font-size: 13px; line-height: 19px; text-align: right; padding-right: 1px; white-space: nowrap; }
.pageno span { color: #888; font-size: 15px; }
.pageno small { font-size: 9px; vertical-align: 4px; }
.views { position: absolute; left: 1493px; top: 0; height: 30px; display: flex; align-items: center; }
.v18 { width: 18px; height: 24px; flex: none; }
.v24 { width: 24px; height: 24px; flex: none; }
.vact { width: 28px; height: 28px; display: flex; justify-content: center; align-items: center; border: 1px solid #a89a70; border-radius: 3px; background: linear-gradient(#fcecc4, #f7cf7e); }
.slider { width: 100px; height: 1px; background: #444; position: relative; flex: none; }
.slider i { position: absolute; left: 55px; top: -12px; width: 7px; height: 24px; background: #fff; border: 1px solid #666; border-radius: 2px; }

.redarrows { position: absolute; left: 0; top: 0; width: 700px; height: 600px; pointer-events: none; }
.ime { position: absolute; left: 1763px; top: 733px; width: 153px; height: 32px; }
.imes { position: absolute; left: 0; top: 1px; width: 30px; height: 30px; z-index: 1; }
.imebar { position: absolute; left: 27px; top: 5px; width: 126px; height: 25px; background: rgba(255,255,255,.95); border: 1px solid #c5d6ec; border-radius: 2px; display: flex; align-items: center; padding-left: 10px; gap: 9px; }
.imebar b { font-size: 15px; color: #1669c8; }
.imi { width: 15px; height: 15px; flex: none; }

.promo { position: absolute; left: 1592px; top: 813px; width: 298px; height: 168px; border: 1px solid #eec48c; border-radius: 3px; background: linear-gradient(#fde9c9, #fdcf90); overflow: hidden; }
.promobg { position: absolute; left: 0; top: 0; width: 298px; height: 168px; }
.promo h2 { position: relative; margin: 9px 0 0 11px; font-size: 12px; line-height: 16px; color: #111; }
.promomain { position: relative; display: flex; margin-top: 24px; }
.badge { width: 64px; height: 58px; margin-left: 30px; flex: none; }
.promotxt { margin-left: 1px; font-size: 13.800px; line-height: 28px; color: #222; }
.promotxt p { margin: 0; white-space: nowrap; }
.open { position: absolute; left: 64px; top: 121px; width: 169px; height: 33px; border: 0; border-radius: 2px; background: linear-gradient(#3f3f3f, #282828); color: #e6c48c; box-shadow: 0 3px 8px rgba(120,80,20,.4); font: 14px "Liberation Sans", "Noto Sans CJK SC", sans-serif; }
.winact { position: absolute; left: 1632px; top: 943px; display: flex; flex-direction: column; color: rgba(120,120,120,.6); }
.winact b { font-weight: 400; font-size: 20px; line-height: 28px; }
.winact span { font-size: 14px; line-height: 18px; margin-top: 1px; }
.mark { position: absolute; left: 1760px; top: 984px; display: flex; }
.markic { width: 46px; height: 44px; flex: none; }
.marktxt { display: flex; flex-direction: column; margin-left: -2px; }
.marktxt b { font-size: 21px; line-height: 28px; color: rgba(63,130,205,.85); }
.marktxt span { font: bold 18px/20px "Liberation Sans", sans-serif; color: rgba(70,165,100,.9); }
.gadget { position: absolute; left: 1910px; top: 855px; width: 10px; height: 57px; background: repeating-linear-gradient(#3b3b3b 0 2px, #7da08a 2px 3px); border-radius: 3px 0 0 3px; border: 2px solid #333; }
```
